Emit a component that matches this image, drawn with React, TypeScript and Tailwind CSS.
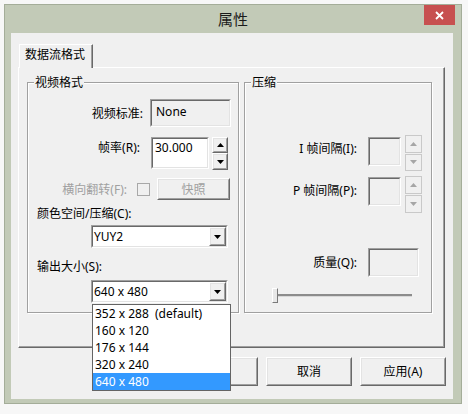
import React from "react";

const FONT = "font-['Noto_Sans','Noto_Sans_CJK_SC',sans-serif]";

const SIZES = ["352 x 288  (default)", "160 x 120", "176 x 144", "320 x 240", "640 x 480"];

function Tri({ up, color = "#000000" }: { up?: boolean; color?: string }) {
  return (
    <svg width="7" height="4" viewBox="0 0 7 4">
      <polygon points={up ? "3.5,0 7,4 0,4" : "0,0 7,0 3.5,4"} fill={color} />
    </svg>
  );
}

function Sunken({
  className = "",
  inner = "",
  children,
}: {
  className?: string;
  inner?: string;
  children?: React.ReactNode;
}) {
  return (
    <div
      className={`border-t border-l border-r border-b border-t-[#a0a0a0] border-l-[#a0a0a0] border-r-white border-b-white ${className}`}
    >
      <div
        className={`h-full border-t border-l border-r border-b border-t-[#696969] border-l-[#696969] border-r-[#e3e3e3] border-b-[#e3e3e3] ${inner}`}
      >
        {children}
      </div>
    </div>
  );
}

function Raised({
  className = "",
  inner = "",
  children,
}: {
  className?: string;
  inner?: string;
  children?: React.ReactNode;
}) {
  return (
    <div
      className={`bg-[#f0f0f0] border-t border-l border-r border-b border-t-white border-l-white border-r-[#696969] border-b-[#696969] ${className}`}
    >
      <div
        className={`h-full flex items-center justify-center border-t border-l border-r border-b border-t-[#e3e3e3] border-l-[#e3e3e3] border-r-[#a0a0a0] border-b-[#a0a0a0] ${inner}`}
      >
        {children}
      </div>
    </div>
  );
}

// disabled spin, flat light look
function DisabledSpin({ className = "" }: { className?: string }) {
  return (
    <div className={`flex flex-col gap-[1px] ${className}`}>
      <div className="flex-1 flex items-center justify-center bg-[#f0f0f0] border border-[#c9c9c9]">
        <Tri up color="#a6a6a6" />
      </div>
      <div className="flex-1 flex items-center justify-center bg-[#f0f0f0] border border-[#c9c9c9]">
        <Tri color="#a6a6a6" />
      </div>
    </div>
  );
}

function Combo({ value, className = "" }: { value: string; className?: string }) {
  return (
    <Sunken className={`h-[23px] ${className}`} inner="bg-white flex items-center">
      <span className="flex-1 pl-[1px] leading-[17px]">{value}</span>
      <Raised className="w-[17px] h-full">
        <Tri />
      </Raised>
    </Sunken>
  );
}

function Group({
  title,
  className = "",
  children,
}: {
  title: string;
  className?: string;
  children?: React.ReactNode;
}) {
  return (
    <div
      className={`flex flex-col border border-[#a0a0a0] shadow-[1px_1px_0_#ffffff,inset_1px_1px_0_#ffffff] ${className}`}
    >
      <span className="self-start ml-[6px] -mt-[9px] px-[1px] bg-[#f0f0f0] leading-[17px]">
        {title}
      </span>
      {children}
    </div>
  );
}

export default function App() {
  return (
    <div
      className={`relative w-[468px] h-[414px] overflow-hidden bg-[#f7f7f7] text-[12px] leading-[17px] text-black ${FONT}`}
    >
      <div className="h-[4px]" />

      {/* dialog window */}
      <div className="ml-[4px] w-[458px] h-[400px] border border-[#a4ad99] bg-[#c2cab7] flex flex-col">
        {/* title bar */}
        <div className="h-[28px] grid grid-cols-[1fr_auto_1fr]">
          <div />
          <div className="text-[15px] leading-[28px] text-[#1a1a1a]">属性</div>
          <div className="flex justify-end pr-[6px]">
            <div className="w-[31px] h-[20px] bg-[#c75050] flex items-center justify-center">
              <svg width="9" height="9" viewBox="0 0 9 9">
                <path d="M1 1 L8 8 M8 1 L1 8" stroke="#ffffff" strokeWidth="1.8" />
              </svg>
            </div>
          </div>
        </div>

        {/* client area */}
        <div className="ml-[6px] w-[442px] h-[366px] bg-[#f0f0f0] flex flex-col">
          <div className="pl-[7px] pt-[11px]">
            {/* tab */}
            <div className="relative z-10 ml-[1px] -mb-[1px] w-[74px] h-[24px] bg-[#f0f0f0] border-t border-l border-r border-t-white border-l-white border-r-[#696969]">
              <div className="h-full pl-[5px] pt-[1px] border-r border-r-[#a0a0a0]">
                数据流格式
              </div>
            </div>

            {/* tab page */}
            <div className="w-[427px] h-[281px] border-t border-l border-r border-b border-t-white border-l-white border-r-[#696969] border-b-[#696969]">
              <div className="h-full flex items-start pl-[8px] pt-[14px] border-r border-b border-r-[#a0a0a0] border-b-[#a0a0a0]">
                {/* 视频格式 */}
                <Group title="视频格式" className="w-[212px] h-[231px]">
                  <div className="mt-[8px] flex items-center">
                    <span className="w-[115px] text-right">视频标准:</span>
                    <Sunken className="ml-[7px] w-[81px] h-[28px]" inner="bg-[#f0f0f0] pl-[4px] pt-[2px]">
                      None
                    </Sunken>
                  </div>
                  <div className="mt-[10px] flex items-start">
                    <span className="w-[112px] text-right mt-[2px]">帧率(R):</span>
                    <Sunken className="ml-[11px] w-[58px] h-[32px]" inner="bg-white pl-[2px]">
                      30.000
                    </Sunken>
                    <div className="ml-[3px] w-[16px] h-[33px] flex flex-col">
                      <Raised className="h-[16px]">
                        <Tri up />
                      </Raised>
                      <Raised className="h-[17px]">
                        <Tri />
                      </Raised>
                    </div>
                  </div>
                  <div className="mt-[8px] flex items-center h-[22px]">
                    <span className="w-[99px] text-right text-[#a0a0a0]">横向翻转(F):</span>
                    <div className="ml-[10px] w-[13px] h-[13px] bg-[#f0f0f0] border border-[#a8a8a8]" />
                    <Raised className="ml-[7px] w-[73px] h-[22px]" inner="text-[#a0a0a0]">
                      快照
                    </Raised>
                  </div>
                  <span className="mt-[5px] pl-[9px]">颜色空间/压缩(C):</span>
                  <Combo value="YUY2" className="mt-[3px] ml-[63px] w-[137px]" />
                  <span className="mt-[10px] pl-[9px]">输出大小(S):</span>
                  <Combo value="640 x 480" className="mt-[5px] ml-[63px] w-[137px]" />
                </Group>

                {/* 压缩 */}
                <Group title="压缩" className="ml-[5px] w-[188px] h-[231px]">
                  <div className="mt-[44px] flex items-start">
                    <span className="w-[112px] text-right mt-[5px]">I 帧间隔(I):</span>
                    <Sunken className="ml-[11px] mt-[2px] w-[33px] h-[29px]" inner="bg-[#f0f0f0]" />
                    <DisabledSpin className="ml-[4px] w-[17px] h-[36px]" />
                  </div>
                  <div className="mt-[5px] flex items-start">
                    <span className="w-[112px] text-right mt-[6px]">P 帧间隔(P):</span>
                    <Sunken className="ml-[11px] mt-[1px] w-[33px] h-[29px]" inner="bg-[#f0f0f0]" />
                    <DisabledSpin className="ml-[4px] w-[17px] h-[37px]" />
                  </div>
                  <div className="mt-[35px] flex items-center h-[29px]">
                    <span className="w-[112px] text-right">质量(Q):</span>
                    <Sunken className="ml-[11px] w-[51px] h-[29px]" inner="bg-[#f0f0f0]" />
                  </div>
                  <div className="mt-[11px] ml-[27px] flex items-center">
                    <div className="w-[6px] h-[15px] bg-[#e8e8e8] border-t border-l border-r border-b border-t-white border-l-white border-r-[#7a7a7a] border-b-[#7a7a7a]" />
                    <div className="w-[134px] h-[3px] bg-[#8c8c8c] border-b border-b-[#d8d8d8]" />
                  </div>
                </Group>
              </div>
            </div>
          </div>

          {/* bottom buttons */}
          <div className="mt-[9px] pr-[7px] flex justify-end gap-[8px]">
            <Raised className="w-[86px] h-[29px]">确定</Raised>
            <Raised className="w-[86px] h-[29px]">取消</Raised>
            <Raised className="w-[86px] h-[29px]">应用(A)</Raised>
          </div>
        </div>
      </div>

      {/* open drop-down list of 输出大小 */}
      <div className="absolute left-[92px] top-[304px] w-[139px] bg-white border border-[#646464]">
        {SIZES.map((s, i) => (
          <div
            key={s}
            className={`h-[17px] pl-[2px] whitespace-pre ${
              i === SIZES.length - 1 ? "bg-[#3399ff] text-white" : ""
            }`}
          >
            {s}
          </div>
        ))}
      </div>
    </div>
  );
}
